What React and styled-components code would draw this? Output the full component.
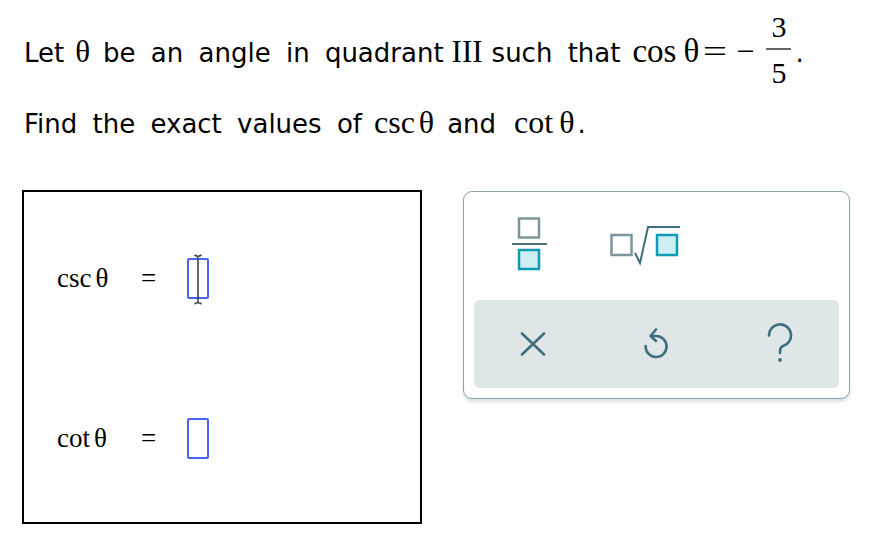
import styled, { createGlobalStyle } from "styled-components";

const Global = createGlobalStyle`
  body {
    margin: 0;
    background: #fff;
    font-family: "DejaVu Sans", Verdana, sans-serif;
    color: #000;
  }
`;

const Page = styled.div`
  width: 892px;
  height: 560px;
  padding-left: 22px;
  box-sizing: border-box;
  overflow: hidden;
`;

const Line = styled.p`
  margin: ${(p) => p.mt || 0}px 0 0 0;
  padding-left: 2px;
  font-size: 26px;
  line-height: ${(p) => p.lh}px;
  word-spacing: 7px;
  white-space: nowrap;
`;

const Math = styled.span`
  font-family: "Liberation Serif", "Times New Roman", serif;
  font-size: ${(p) => p.size || 32}px;
  line-height: 1;
  word-spacing: 0;
  margin: 0 ${(p) => p.mr ?? 8}px 0 ${(p) => p.ml ?? 8}px;
`;

const Wide = styled.span`
  display: inline-block;
  transform: scaleX(${(p) => p.sx || 1});
  margin: 0 ${(p) => p.pad || 0}px;
`;

const Theta = styled.span`
  margin-left: ${(p) => p.gap ?? 4}px;
`;

const Fraction = styled.span`
  display: inline-flex;
  flex-direction: column;
  align-items: center;
  vertical-align: 25px;
  font-family: "Liberation Serif", "Times New Roman", serif;
  font-size: 30px;
  line-height: 30px;
  margin: 0 4px 0 12px;
`;

const Bar = styled.span`
  display: block;
  width: 25px;
  height: 2px;
  background: #666;
  margin: 6px 0 8px;
`;

const Work = styled.div`
  display: flex;
  align-items: flex-start;
  margin-top: 46px;
  gap: 41px;
`;

const AnswerBox = styled.div`
  width: 400px;
  height: 334px;
  border: 2px solid #000;
  box-sizing: border-box;
  padding: 66px 0 0 33px;
  display: flex;
  flex-direction: column;
  gap: 119px;
`;

const Row = styled.div`
  display: flex;
  align-items: center;
  height: 41px;
`;

const Label = styled.span`
  font-family: "Liberation Serif", "Times New Roman", serif;
  font-size: 27px;
  width: 84px;
`;

const Equals = styled.span`
  font-family: "Liberation Serif", "Times New Roman", serif;
  font-size: 27px;
  width: 46px;
`;

const Slot = styled.span`
  position: relative;
  display: inline-block;
  width: 22px;
  height: 41px;
  border: 2px solid #4a63ff;
  border-radius: 2px;
  box-sizing: border-box;
`;

const Caret = styled.svg`
  position: absolute;
  left: 4px;
  top: -6px;
`;

const Panel = styled.div`
  margin-top: 1px;
  width: 387px;
  height: 208px;
  box-sizing: border-box;
  border: 1.5px solid #8ea3aa;
  border-radius: 9px;
  box-shadow: 0 3px 3px rgba(120, 140, 150, 0.25);
  padding: 0 10px 10px 10px;
  display: flex;
  flex-direction: column;
`;

const Tools = styled.div`
  flex: 1;
  display: flex;
  align-items: center;
  padding-left: 38px;
  gap: 62px;
`;

const Keys = styled.div`
  height: 88px;
  background: #dfe6e8;
  border-radius: 6px;
  display: grid;
  grid-template-columns: repeat(3, 1fr);
  align-items: center;
  justify-items: center;
`;

const IconBtn = styled.div`
  display: flex;
  align-items: center;
  justify-content: center;
  color: #3d6e7d;
  margin-left: ${(p) => p.ml || 0}px;
  margin-top: ${(p) => p.mt || 0}px;
`;

const FracIcon = () => (
  <svg width="36" height="58" viewBox="0 0 36 58">
    <rect x="7" y="1.5" width="20" height="19" fill="none" stroke="#7b969e" strokeWidth="2.5" />
    <rect x="0" y="26" width="35" height="2" fill="#4f727d" />
    <rect x="7" y="33" width="20" height="19" fill="#cdeef2" stroke="#0f9bb1" strokeWidth="2.5" />
  </svg>
);

const SqrtIcon = () => (
  <svg width="72" height="42" viewBox="0 0 72 42">
    <rect x="1.5" y="10" width="20" height="20" fill="none" stroke="#7b969e" strokeWidth="2.5" />
    <path d="M25 28 L30 38 L38 2 L70 2" fill="none" stroke="#3d6e7d" strokeWidth="2" />
    <rect x="47" y="10" width="20" height="20" fill="#cdeef2" stroke="#0f9bb1" strokeWidth="2.5" />
  </svg>
);

const CloseIcon = () => (
  <svg width="26" height="24" viewBox="0 0 26 24" fill="none" stroke="currentColor" strokeWidth="2.6" strokeLinecap="round">
    <path d="M2 1.5 L24 22.5 M24 1.5 L2 22.5" />
  </svg>
);

const UndoIcon = () => (
  <svg width="30" height="36" viewBox="0 0 30 36" fill="none" stroke="currentColor" strokeWidth="2.6" strokeLinecap="round" strokeLinejoin="round">
    <path d="M11 12 L15 12 A10.5 10.5 0 1 1 4.6 22" />
    <path d="M15 5.5 L9.5 12 L15 17" />
  </svg>
);

const HelpIcon = () => (
  <svg width="28" height="40" viewBox="0 0 28 40" fill="none" stroke="currentColor" strokeWidth="2.6" strokeLinecap="round">
    <path d="M3 12.5 A11 11 0 1 1 17.5 22.8 C15 23.8 14 25.5 14 28 L14 30" />
    <circle cx="14" cy="37" r="1.9" fill="currentColor" stroke="none" />
  </svg>
);

export default function App() {
  return (
    <>
      <Global />
      <Page>
        <Line lh={90} mt={8}>
          Let<Math size={31} ml={11} mr={13}>θ</Math>be an angle in quadrant<Math size={31} ml={8} mr={9}>III</Math>such that
          <Math size={33} ml={12} mr={3}>
            cos<Theta gap={7}>θ</Theta>
          </Math>
          <Math ml={0} mr={0}>
            <Wide sx={1.35} pad={4}>=</Wide>
          </Math>
          <Math ml={8} mr={0}>−</Math>
          <Fraction>
            <span>3</span>
            <Bar />
            <span>5</span>
          </Fraction>
          .
        </Line>
        <Line lh={40} mt={6}>
          Find the exact values of<Math ml={12} mr={13}>
            csc<Theta>θ</Theta>
          </Math>and<Math ml={18} mr={3}>
            cot<Theta gap={6}>θ</Theta>
          </Math>.
        </Line>
        <Work>
          <AnswerBox>
            <Row>
              <Label>
                csc<Theta>θ</Theta>
              </Label>
              <Equals>=</Equals>
              <Slot>
                <Caret width="10" height="51" viewBox="0 0 10 51">
                  <path d="M1.5 1 Q5 3.5 8.5 1 M5 2.5 L5 48.5 M1.5 50 Q5 47.5 8.5 50" fill="none" stroke="#444" strokeWidth="1.6" />
                </Caret>
              </Slot>
            </Row>
            <Row>
              <Label>
                cot<Theta>θ</Theta>
              </Label>
              <Equals>=</Equals>
              <Slot />
            </Row>
          </AnswerBox>
          <Panel>
            <Tools>
              <FracIcon />
              <SqrtIcon />
            </Tools>
            <Keys>
              <IconBtn ml={-4}>
                <CloseIcon />
              </IconBtn>
              <IconBtn mt={-4}>
                <UndoIcon />
              </IconBtn>
              <IconBtn ml={4} mt={-2}>
                <HelpIcon />
              </IconBtn>
            </Keys>
          </Panel>
        </Work>
      </Page>
    </>
  );
}
